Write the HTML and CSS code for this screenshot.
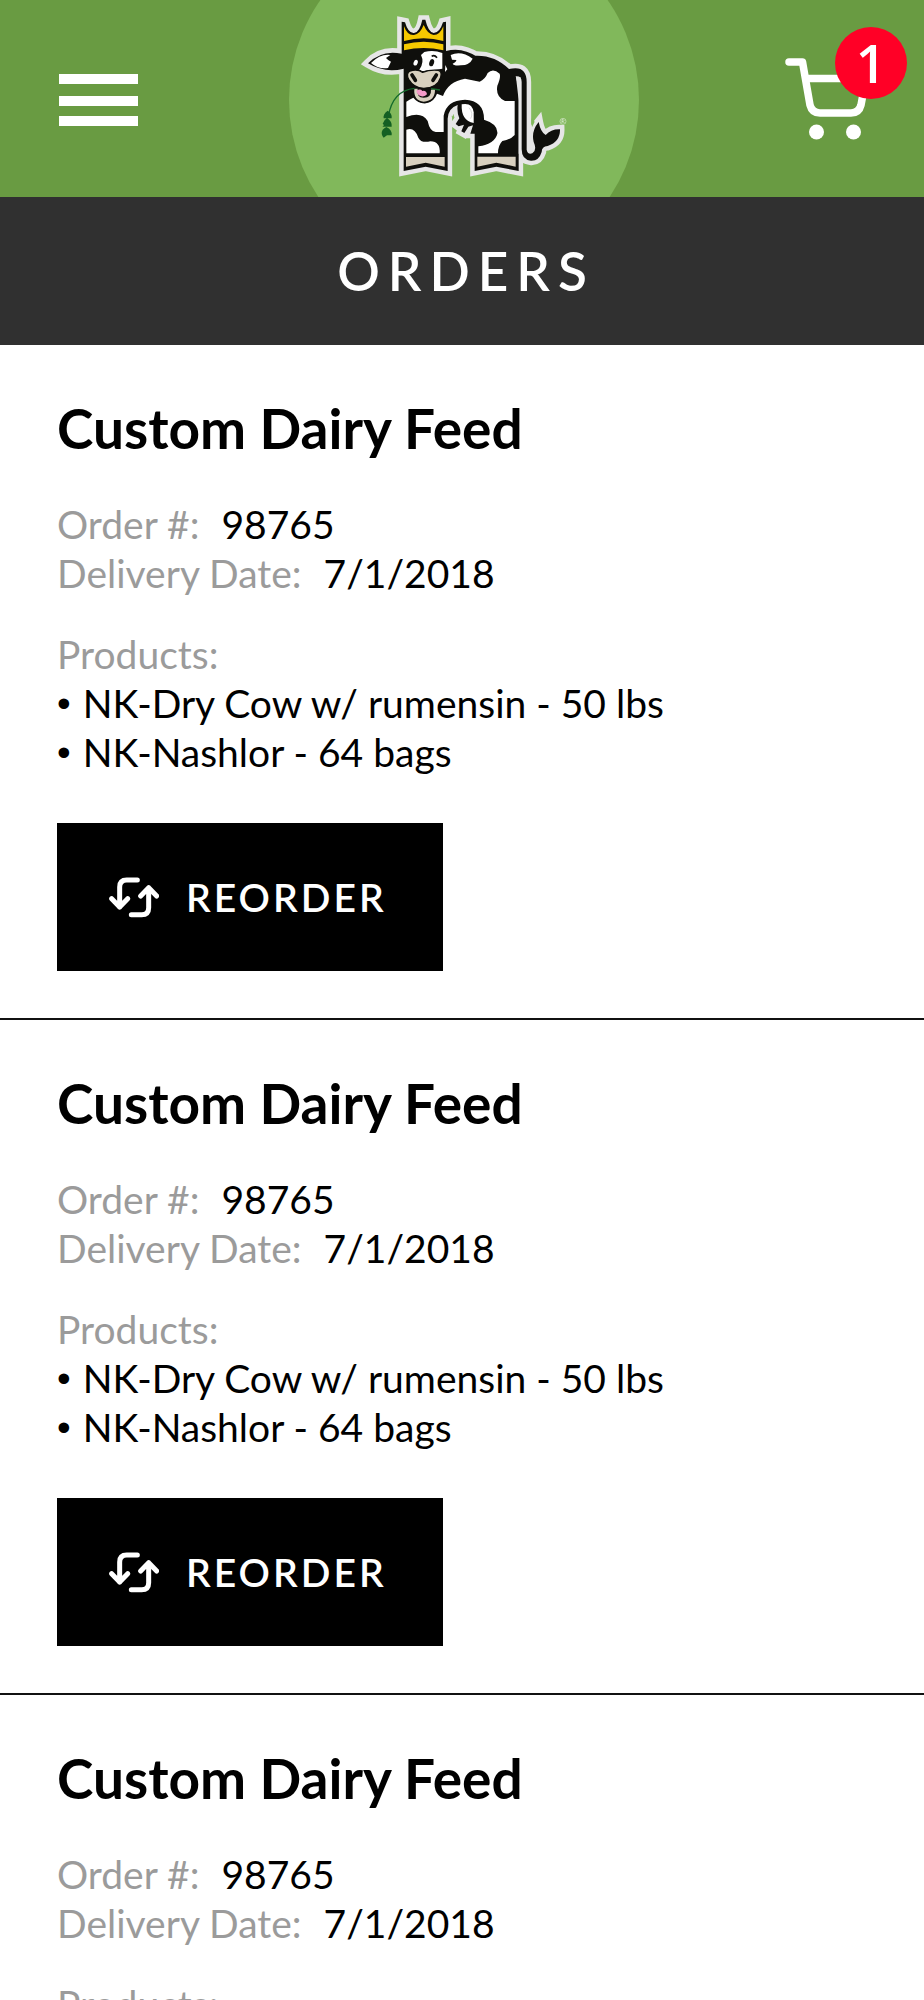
FILE: index.html
```html
<!DOCTYPE html>
<html lang="en">
<head>
<meta charset="utf-8">
<meta name="viewport" content="width=device-width, initial-scale=1">
<title>Orders</title>
<link rel="stylesheet" href="styles.css">
</head>
<body>
<header class="topbar">
  <button class="icon-button" type="button" aria-label="Menu">
    <svg class="menu-icon" viewBox="0 0 79 52" aria-hidden="true"><path fill="#fff" d="M0 0h79v10H0zM0 22h79v10H0zM0 42h79v10H0z"/></svg>
  </button>
  <a class="brand" href="#" aria-label="Home">
    <svg class="logo" viewBox="265 41 624 519" aria-hidden="true">
      <defs>
        <g id="shape">
          <path d="M390 64L400 66Q410 100 427 98Q444 96 452 58H461Q470 96 486 98Q504 98 514 66L523 64V152Q555 143 585 154Q602 160 611 166Q670 164 712 206Q765 193 765 245V448Q768 464 782 459Q797 449 786 425Q778 393 801 365Q807 396 822 404Q838 386 865 387Q866 424 828 437Q810 438 810 455Q802 482 778 481Q750 479 750 447V245Q750 226 732 228Q742 260 741 300V512L674 499L609 512V400H596L604 375L590 379L578 398L569 393L577 373L561 378L552 371L563 354Q555 335 558 314Q530 323 528 355V512L462 499L396 512V205Q340 220 289 189Q330 147 390 160Z"/>
        </g>
      </defs>
      <use href="#shape" fill="#e6e6e6" stroke="#e6e6e6" stroke-width="27" stroke-miterlimit="3"/>
      <path fill="#81b85b" d="M540 346l6 4-4 9zM779 354l10 10-8 17z"/>
      <use href="#shape" fill="#0f0f0c"/>
      <path fill="#f6c900" d="M397 78Q407 106 427 104Q445 102 456 74Q468 102 486 104Q505 104 515 78V122Q456 106 397 122ZM397 132Q456 117 515 132V150Q456 136 397 150Z"/>
      <path fill="#fff" d="M298 188Q326 160 356 164L343 173Q350 181 358 184L349 203Q320 207 298 188Z"/>
      <path fill="#fff" d="M458 155Q486 148 512 158V205Q490 208 471 212Q450 215 443 208Q459 186 448 164Z"/>
      <path fill="#fff" d="M537 164Q568 149 603 175Q594 194 568 195Q545 197 543 190Q555 184 554 179L541 178ZM521 194l6 13-7 8z"/>
      <ellipse cx="432" cy="187" rx="6" ry="9" fill="#fff" transform="rotate(22 432 187)"/>
      <ellipse cx="480" cy="187" rx="7" ry="11" fill="#0f0f0c" transform="rotate(18 480 187)"/>
      <path d="M480 168Q488 162 496 172" fill="none" stroke="#0f0f0c" stroke-width="5"/>
      <path fill="#fff" d="M404 304Q415 296 425 292Q440 311 463 309Q488 304 496 280L514 287Q529 244 580 235L624 244Q640 238 648 218Q664 202 684 220Q688 232 677 256Q671 290 700 302H729V404Q715 419 692 422Q679 435 679 459H620V438Q670 430 677 400Q680 371 637 358Q638 301 580 298Q524 300 516 346V395H492Q474 393 468 362Q450 332 404 350Z"/>
      <path fill="#fff" d="M404 388Q429 379 440 412Q448 429 476 423Q507 424 504 459H404Z"/>
      <path fill="#0f0f0c" d="M413 212Q435 203 453 213Q477 206 506 211Q514 235 498 254Q492 309 456 308Q423 305 424 266Q401 245 407 220Z"/>
      <path fill="#d8d0bf" stroke="#0f0f0c" stroke-width="4" d="M415 212Q437 205 453 216Q475 207 500 210Q512 213 507 231Q497 263 456 264Q425 262 411 237Q402 220 415 212Z"/>
      <path fill="#d8d0bf" d="M428 265H438Q434 292 456 292Q480 291 478 268L490 266Q491 302 456 304Q425 301 428 265Z"/>
      <path fill="#f49ac8" d="M434 271Q446 264 452 272Q464 269 466 282Q460 290 449 288Q435 283 434 271Z"/>
      <path d="M421 224l10 16M494 224l-10 16" stroke="#0f0f0c" stroke-width="11" stroke-linecap="round"/>
      <path d="M478 265L505 269M429 264Q363 270 350 348" fill="none" stroke="#146a2c" stroke-width="4"/>
      <path fill="#146023" d="M348 331Q362 339 360 354H336Q333 342 348 331ZM346 353Q362 363 360 379H332Q340 374 333 370Q336 359 346 353ZM344 380Q362 388 360 405H346L336 412Q326 400 333 388Q338 383 344 380Z"/>
      <path fill="#fff" d="M570 312Q602 305 606 336V368Q568 362 570 312Z"/>
      <path fill="none" stroke="#dcdcdc" stroke-width="3" d="M592 322q14 17 5 33"/>
      <path fill="#e6e6e6" d="M733 231h14v229h-6V300z"/>
      <path fill="#d8d0bf" d="M403 470H519V499L462 487L403 499ZM617 469H732V499L674 487L617 499Z"/>
      <circle cx="874" cy="363" r="9" fill="none" stroke="#d5e6ca" stroke-width="2"/>
      <path fill="none" stroke="#e7f1e0" stroke-width="2" d="M871 368v-10h4q4 3 0 5h-4m3 0l4 5"/>
    </svg>
  </a>
  <button class="icon-button cart" type="button" aria-label="Cart, 1 item">
    <svg class="cart-icon" viewBox="0 0 84 84" aria-hidden="true">
      <path d="M5 6H18.500L26 49Q28 57 36 57H67Q75 57 77 49L82 22.500H22" fill="none" stroke="#fff" stroke-width="7.500" stroke-linecap="round" stroke-linejoin="round"/>
      <circle cx="32.500" cy="76" r="7.500" fill="#fff"/><circle cx="69.500" cy="76" r="7.500" fill="#fff"/>
    </svg>
    <span class="badge">1</span>
  </button>
</header>
<h1 class="page-title">ORDERS</h1>
<svg class="symbols" aria-hidden="true">
  <symbol id="reorder" viewBox="204 200 150 123">
    <path d="M289 209H257Q236 209 236 230V290M212 265L236 290L260 265M271 313H302Q323 313 323 292V232M299 257L323 232L347 257" fill="none" stroke="#fff" stroke-width="15" stroke-linecap="round" stroke-linejoin="round"/>
  </symbol>
</svg>
<main>
  <section class="order">
    <h2 class="order-title">Custom Dairy Feed</h2>
    <dl class="facts">
      <div class="fact"><dt>Order #:</dt><dd>98765</dd></div>
      <div class="fact"><dt>Delivery Date:</dt><dd>7/1/2018</dd></div>
    </dl>
    <p class="label">Products:</p>
    <ul class="products"><li>NK-Dry Cow w/ rumensin - 50 lbs</li><li>NK-Nashlor - 64 bags</li></ul>
    <button class="reorder" type="button"><svg class="reorder-icon" aria-hidden="true"><use href="#reorder"/></svg><span>REORDER</span></button>
  </section>
  <section class="order">
    <h2 class="order-title">Custom Dairy Feed</h2>
    <dl class="facts">
      <div class="fact"><dt>Order #:</dt><dd>98765</dd></div>
      <div class="fact"><dt>Delivery Date:</dt><dd>7/1/2018</dd></div>
    </dl>
    <p class="label">Products:</p>
    <ul class="products"><li>NK-Dry Cow w/ rumensin - 50 lbs</li><li>NK-Nashlor - 64 bags</li></ul>
    <button class="reorder" type="button"><svg class="reorder-icon" aria-hidden="true"><use href="#reorder"/></svg><span>REORDER</span></button>
  </section>
  <section class="order">
    <h2 class="order-title">Custom Dairy Feed</h2>
    <dl class="facts">
      <div class="fact"><dt>Order #:</dt><dd>98765</dd></div>
      <div class="fact"><dt>Delivery Date:</dt><dd>7/1/2018</dd></div>
    </dl>
    <p class="label">Products:</p>
    <ul class="products"><li>NK-Dry Cow w/ rumensin - 50 lbs</li><li>NK-Nashlor - 64 bags</li></ul>
    <button class="reorder" type="button"><svg class="reorder-icon" aria-hidden="true"><use href="#reorder"/></svg><span>REORDER</span></button>
  </section>
</main>
</body>
</html>
```
FILE: styles.css
```css
* { box-sizing: border-box; }
body, h1, h2, p, dl, dd, ul { margin: 0; padding: 0; }
html { scrollbar-width: none; }
body {
  background: #fff;
  color: #000;
  font-family: Lato, "Open Sans", sans-serif;
  font-size: 39px;
  line-height: 49px;
}
svg { display: block; }
.symbols { display: none; }
button { border: 0; font: inherit; color: inherit; cursor: pointer; }

.topbar {
  display: grid;
  grid-template-columns: 1fr auto 1fr;
  align-items: center;
  height: 197px;
  padding: 2px 56px 0 59px;
  overflow: hidden;
  background: #699b42;
}
.icon-button { justify-self: start; padding: 0; background: none; }
.menu-icon { width: 79px; height: 52px; }
.brand {
  display: grid;
  place-items: center;
  width: 350px;
  height: 350px;
  margin: -77px 0;
  border-radius: 50%;
  background: #81b85b;
}
.logo { width: 208px; height: 173px; }
.cart { justify-self: end; position: relative; padding-bottom: 4px; }
.cart-icon { width: 84px; height: 84px; }
.badge {
  position: absolute;
  top: -29px;
  right: -39px;
  width: 72px;
  height: 72px;
  border-radius: 50%;
  background: #ff0026;
  color: #fff;
  font: 600 53px/72px "Open Sans", sans-serif;
  text-align: center;
}

.page-title {
  padding: 42px 0 42px 8px;
  background: #303030;
  color: #fff;
  font-size: 53px;
  font-weight: 600;
  line-height: 64px;
  letter-spacing: 8px;
  text-align: center;
}

.order { padding: 51px 57px 47px; border-bottom: 2px solid #111; }
.order-title { margin-bottom: 40px; font-size: 55px; line-height: 64px; font-weight: 700; }
.facts { margin-bottom: 32px; }
.fact { display: flex; gap: 22px; }
dt, .label { color: #9b9b9b; }
.products { margin-bottom: 46px; list-style: none; }
.products li { display: flex; gap: 12px; }
.products li::before { content: "•"; font-family: "Liberation Sans", sans-serif; }
.reorder {
  display: flex;
  align-items: center;
  gap: 27px;
  height: 148px;
  padding: 0 56px 0 52px;
  background: #000;
  color: #fff;
  font-weight: 600;
  letter-spacing: 3px;
}
.reorder-icon { width: 50px; height: 41px; }
```
